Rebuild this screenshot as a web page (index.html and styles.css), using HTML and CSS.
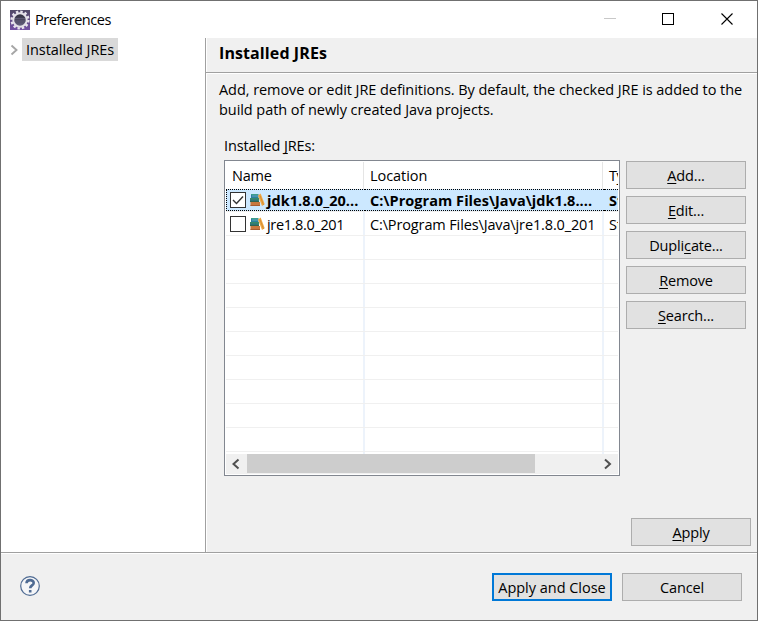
FILE: index.html
```html
<!DOCTYPE html>
<html lang="en">
<head>
<meta charset="utf-8">
<title>Preferences</title>
<link rel="stylesheet" href="styles.css">
</head>
<body>
<svg width="0" height="0" class="defs">
  <symbol id="books" viewBox="0 0 16 14">
    <path d="M2 1h7.500v4H2z" fill="#2b7fa0"/><path d="M2 1.500h7" stroke="#3fa08a"/><path d="M3 3h6" stroke="#7cc4c0" stroke-width=".7"/>
    <path d="M1 5h9v4H1z" fill="#37896a"/><path d="M1 7.200h8" stroke="#2a6a80"/><path d="M1 8.600h9" stroke="#2d5748" stroke-width=".8"/>
    <path d="M1.500 9H11v4H1.500z" fill="#c9783f"/><path d="M1.500 12.500H11" stroke="#a85c30"/>
    <path d="M9 2.500 11.700.5l4 10.800-2.700 1.700z" fill="#efaa45"/><path d="m11 2.500 3.500 9.500" stroke="#d68d35"/>
  </symbol>
</svg>
<div class="window">
  <header class="titlebar">
    <svg class="app-icon" width="20" height="20" viewBox="0 0 20 20">
      <defs>
        <linearGradient id="g" x2="0" y2="1"><stop offset="0" stop-color="#514967"/><stop offset="1" stop-color="#7450a4"/></linearGradient>
        <linearGradient id="d" x2="0" y2="1"><stop offset="0" stop-color="#2c2a3a"/><stop offset="1" stop-color="#6a6584"/></linearGradient>
      </defs>
      <path d="M0 0h20v20H0z" fill="url(#g)"/>
      <circle cx="10" cy="10" r="8.400" fill="none" stroke="#e9e5ee" stroke-width="2.400" stroke-dasharray="2.400 2"/>
      <circle cx="10" cy="10" r="6.700" fill="url(#d)" stroke="#e4e0e8" stroke-width="2"/>
      <path d="M5 8.500h10M4.500 11h11" stroke="#625d78" stroke-width=".8"/>
    </svg>
    <h1 class="title">Preferences</h1>
    <svg class="controls" width="130" height="13" viewBox="0 0 130 13" fill="none" shape-rendering="crispEdges">
      <path d="M0 5.500h12" stroke="#c8c8c8"/>
      <path d="M58.500.5h11v11h-11z" stroke="#000"/>
      <path d="m117.500.5 11 11m0-11-11 11" stroke="#000" shape-rendering="auto" stroke-width="1.100"/>
    </svg>
  </header>
  <main class="main">
    <nav class="tree">
      <svg class="chevron" width="8" height="12" viewBox="0 0 8 12"><path d="m1.500 1.500 5 4.500-5 4.500" fill="none" stroke="#a6a6a6" stroke-width="1.900"/></svg>
      <span class="node">Installed JREs</span>
    </nav>
    <section class="page">
      <h2 class="heading">Installed JREs</h2>
      <p class="intro">Add, remove or edit JRE definitions. By default, the checked JRE is added to the<br>build path of newly created Java projects.</p>
      <div class="label">Installed <u>J</u>REs:</div>
      <div class="content">
        <div class="table">
          <div class="row head"><div class="cell name">Name</div><div class="cell">Location</div><div class="cell">Ty</div></div>
          <div class="row selected">
            <div class="cell"><span class="check"><svg width="14" height="14" viewBox="0 0 14 14"><path d="m2 7 3.500 3.500L12 3.500" fill="none" stroke="#333" stroke-width="1.400"/></svg></span><svg class="books" width="16" height="14"><use href="#books"/></svg><span class="text">jdk1.8.0_20...</span></div>
            <div class="cell"><span class="text">C:\Program Files\Java\jdk1.8....</span></div><div class="cell"><span class="text">St</span></div>
          </div>
          <div class="row">
            <div class="cell jre"><span class="check"></span><svg class="books" width="16" height="14"><use href="#books"/></svg><span class="text">jre1.8.0_201</span></div>
            <div class="cell path"><span class="text">C:\Program Files\Java\jre1.8.0_201</span></div><div class="cell"><span class="text">St</span></div>
          </div>
          <div class="row"><div class="cell"></div><div class="cell"></div><div class="cell"></div></div>
          <div class="row"><div class="cell"></div><div class="cell"></div><div class="cell"></div></div>
          <div class="row"><div class="cell"></div><div class="cell"></div><div class="cell"></div></div>
          <div class="row"><div class="cell"></div><div class="cell"></div><div class="cell"></div></div>
          <div class="row"><div class="cell"></div><div class="cell"></div><div class="cell"></div></div>
          <div class="row"><div class="cell"></div><div class="cell"></div><div class="cell"></div></div>
          <div class="row"><div class="cell"></div><div class="cell"></div><div class="cell"></div></div>
          <div class="row"><div class="cell"></div><div class="cell"></div><div class="cell"></div></div>
          <div class="row"><div class="cell"></div><div class="cell"></div><div class="cell"></div></div>
          <div class="row tail"><div class="cell"></div><div class="cell"></div><div class="cell"></div></div>
          <div class="scrollbar">
            <svg width="21" height="20" viewBox="0 0 21 20"><path d="m12.500 5.500-5 4.500 5 4.500" fill="none" stroke="#505050" stroke-width="2"/></svg>
            <div class="thumb"></div>
            <svg class="right" width="21" height="20" viewBox="0 0 21 20"><path d="m8 5.500 5 4.500-5 4.500" fill="none" stroke="#505050" stroke-width="2"/></svg>
          </div>
        </div>
        <div class="actions">
          <button><u>A</u>dd...</button>
          <button><u>E</u>dit...</button>
          <button>Dupli<u>c</u>ate...</button>
          <button><u>R</u>emove</button>
          <button><u>S</u>earch...</button>
        </div>
      </div>
      <div class="apply"><button><u>A</u>pply</button></div>
    </section>
  </main>
  <footer class="footer">
    <svg class="help" width="20" height="20" viewBox="0 0 20 20" fill="none" stroke="#4f6b93"><circle cx="10" cy="10" r="9.300" fill="#f5f6f8" stroke-width="1.200"/><path d="M6.500 7.300c.2-4.300 7.200-4 7.200-.4 0 2.500-3.500 2.500-3.500 5.300M10.200 14v2.500" stroke-width="2.600"/></svg>
    <button class="default">Apply and Close</button>
    <button>Cancel</button>
  </footer>
</div>
</body>
</html>
```
FILE: styles.css
```css
* { box-sizing: border-box; }
body {
  margin: 0;
  font: 14.5px/20px "Open Sans", "Noto Sans", sans-serif;
  letter-spacing: -0.06px;
  color: #000;
  background: #f0f0f0;
}
h1, h2, p { margin: 0; }
u { text-decoration-thickness: 1px; text-underline-offset: 2px; text-decoration-skip-ink: none; }
.defs { position: absolute; }
.window {
  display: flex;
  flex-direction: column;
  width: 758px;
  height: 621px;
  border: 1px solid #707070;
  background: #f0f0f0;
}
.titlebar {
  display: flex;
  align-items: center;
  height: 37px;
  padding: 0 23px 0 9px;
  background: #fff;
}
.title { margin-left: 5px; font-size: 14.5px; font-weight: 400; letter-spacing: -0.43px; }
.controls { margin-left: auto; }
.main { display: flex; height: 514px; }
.tree {
  display: flex;
  align-items: flex-start;
  width: 204px;
  padding-left: 9px;
  background: #fff;
}
.chevron { margin-top: 6px; }
.node {
  width: 96px;
  height: 23px;
  margin-left: 4px;
  padding: 2px 0 0 4px;
  background: #d9d9d9;
  white-space: nowrap;
}
.page {
  flex: 1;
  display: flex;
  flex-direction: column;
  border-left: 1px solid #a0a0a0;
  box-shadow: inset 1px 0 #fff;
}
.heading {
  height: 35px;
  padding: 5px 0 0 13px;
  border-bottom: 1px solid #a0a0a0;
  box-shadow: 0 1px #fff;
  font-size: 16px;
  line-height: 21px;
  letter-spacing: 0.1px;
}
.intro { height: 63px; padding: 7px 0 0 13px; white-space: nowrap; }
.label { height: 24px; margin-left: 18px; letter-spacing: -0.12px; }
.content { display: flex; gap: 6px; margin-left: 18px; }
.table {
  display: flex;
  flex-direction: column;
  width: 396px;
  height: 316px;
  padding: 1px;
  border: 1px solid #828790;
  background: #fff;
  overflow: hidden;
}
.row {
  flex: none;
  display: grid;
  grid-template-columns: 139px 239px 14px;
  height: 24px;
  border-bottom: 1px solid #f0f0f0;
}
.row.head { height: 27px; border-bottom: 0; }
.row.tail { height: 2px; border-bottom: 0; }
.cell {
  overflow: hidden;
  display: flex;
  align-items: center;
  padding: 1px 0 0 5px;
  border-right: 2px solid #edf3fb;
  white-space: nowrap;
}
.cell:last-child { border-right: 0; }
.cell:first-child { padding-left: 4px; }
.text { padding-top: 2px; }
.head .cell { margin-right: 1px; border-right: 1px solid #e5e5e5; }
.head .cell:last-child { margin-right: 0; border-right: 0; letter-spacing: -0.5px; }
.head .name { padding-left: 6px; letter-spacing: -0.2px; }
.jre { letter-spacing: -0.35px; }
.path { letter-spacing: -0.13px; }
.selected { height: 23px; }
.selected .cell {
  padding-top: 0;
  background: #cce8ff;
  font-weight: 700;
  letter-spacing: 0.05px;
  border-top: 1px dotted #000;
  border-bottom: 1px dotted #000;
  border-right: 0;
}
.selected .cell:first-child { border-left: 1px dotted #000; padding-left: 3px; }
.check {
  flex: none;
  display: flex;
  width: 16px;
  height: 16px;
  border: 1px solid #333;
  background: #fff;
}
.books { flex: none; margin: 0 2px 0 3px; }
.scrollbar { display: flex; flex: none; height: 20px; background: #f0f0f0; }
.thumb { width: 288px; height: 19px; background: #cdcdcd; }
.right { margin-left: auto; }
.actions { display: flex; flex-direction: column; gap: 7px; padding-top: 1px; }
button {
  flex: none;
  width: 120px;
  height: 28px;
  padding: 2px 0 0;
  border: 1px solid #adadad;
  border-radius: 0;
  background: #e1e1e1;
  color: #000;
  font: inherit;
  letter-spacing: -0.15px;
  white-space: nowrap;
}
.apply { display: flex; justify-content: flex-end; margin: auto 6px 6px 0; }
.footer {
  flex: 1;
  display: flex;
  gap: 10px;
  padding: 20px 15px 0 19px;
  border-top: 1px solid #a0a0a0;
  box-shadow: inset 0 1px #fff;
}
.help { margin: 3px auto 0 0; }
.default { border: 2px solid #0078d7; letter-spacing: -0.02px; }
```
